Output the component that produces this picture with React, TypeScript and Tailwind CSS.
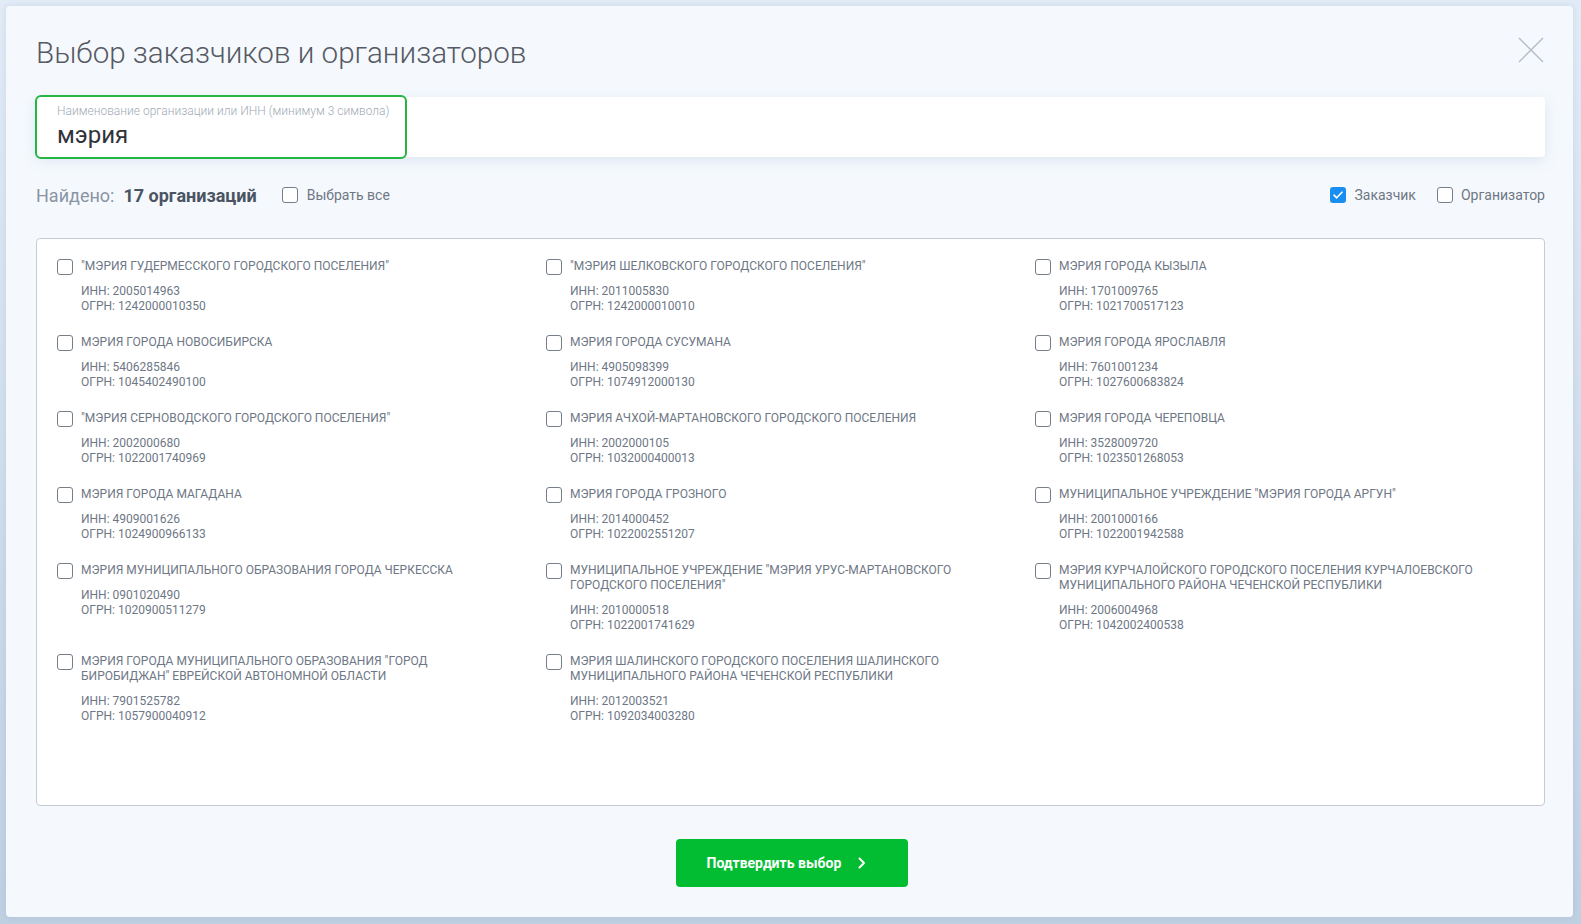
import React from 'react';

interface Org {
  name: string;
  inn: string;
  ogrn: string;
}

const orgs: Org[] = [
  { name: '"МЭРИЯ ГУДЕРМЕССКОГО ГОРОДСКОГО ПОСЕЛЕНИЯ"', inn: '2005014963', ogrn: '1242000010350' },
  { name: '"МЭРИЯ ШЕЛКОВСКОГО ГОРОДСКОГО ПОСЕЛЕНИЯ"', inn: '2011005830', ogrn: '1242000010010' },
  { name: 'МЭРИЯ ГОРОДА КЫЗЫЛА', inn: '1701009765', ogrn: '1021700517123' },
  { name: 'МЭРИЯ ГОРОДА НОВОСИБИРСКА', inn: '5406285846', ogrn: '1045402490100' },
  { name: 'МЭРИЯ ГОРОДА СУСУМАНА', inn: '4905098399', ogrn: '1074912000130' },
  { name: 'МЭРИЯ ГОРОДА ЯРОСЛАВЛЯ', inn: '7601001234', ogrn: '1027600683824' },
  { name: '"МЭРИЯ СЕРНОВОДСКОГО ГОРОДСКОГО ПОСЕЛЕНИЯ"', inn: '2002000680', ogrn: '1022001740969' },
  { name: 'МЭРИЯ АЧХОЙ-МАРТАНОВСКОГО ГОРОДСКОГО ПОСЕЛЕНИЯ', inn: '2002000105', ogrn: '1032000400013' },
  { name: 'МЭРИЯ ГОРОДА ЧЕРЕПОВЦА', inn: '3528009720', ogrn: '1023501268053' },
  { name: 'МЭРИЯ ГОРОДА МАГАДАНА', inn: '4909001626', ogrn: '1024900966133' },
  { name: 'МЭРИЯ ГОРОДА ГРОЗНОГО', inn: '2014000452', ogrn: '1022002551207' },
  { name: 'МУНИЦИПАЛЬНОЕ УЧРЕЖДЕНИЕ "МЭРИЯ ГОРОДА АРГУН"', inn: '2001000166', ogrn: '1022001942588' },
  { name: 'МЭРИЯ МУНИЦИПАЛЬНОГО ОБРАЗОВАНИЯ ГОРОДА ЧЕРКЕССКА', inn: '0901020490', ogrn: '1020900511279' },
  { name: 'МУНИЦИПАЛЬНОЕ УЧРЕЖДЕНИЕ "МЭРИЯ УРУС-МАРТАНОВСКОГО ГОРОДСКОГО ПОСЕЛЕНИЯ"', inn: '2010000518', ogrn: '1022001741629' },
  { name: 'МЭРИЯ КУРЧАЛОЙСКОГО ГОРОДСКОГО ПОСЕЛЕНИЯ КУРЧАЛОЕВСКОГО МУНИЦИПАЛЬНОГО РАЙОНА ЧЕЧЕНСКОЙ РЕСПУБЛИКИ', inn: '2006004968', ogrn: '1042002400538' },
  { name: 'МЭРИЯ ГОРОДА МУНИЦИПАЛЬНОГО ОБРАЗОВАНИЯ "ГОРОД БИРОБИДЖАН" ЕВРЕЙСКОЙ АВТОНОМНОЙ ОБЛАСТИ', inn: '7901525782', ogrn: '1057900040912' },
  { name: 'МЭРИЯ ШАЛИНСКОГО ГОРОДСКОГО ПОСЕЛЕНИЯ ШАЛИНСКОГО МУНИЦИПАЛЬНОГО РАЙОНА ЧЕЧЕНСКОЙ РЕСПУБЛИКИ', inn: '2012003521', ogrn: '1092034003280' },
];

const Box: React.FC<{ checked?: boolean }> = ({ checked }) =>
  checked ? (
    <span className="flex h-4 w-4 shrink-0 items-center justify-center rounded-[3px] bg-[#1a8df0]">
      <svg width="10" height="8" viewBox="0 0 10 8" fill="none">
        <path d="M1 4.2L3.7 6.8L9 1.2" stroke="white" strokeWidth="1.6" strokeLinecap="round" strokeLinejoin="round" />
      </svg>
    </span>
  ) : (
    <span className="block h-4 w-4 shrink-0 rounded-[3px] border-[1.5px] border-[#767e8a] bg-white" />
  );

const light = { fontFamily: '"Roboto Light", Roboto, "Noto Sans", sans-serif' };

export default function App() {
  return (
    <div
      className="h-[924px] w-full overflow-hidden bg-gradient-to-b from-[#e2ecf7] to-[#c0d0e3] pl-[6px] pt-[6px]"
      style={{ fontFamily: 'Roboto, "Noto Sans", sans-serif' }}
    >
      <div className="relative flex h-[911px] w-[1567px] flex-col rounded-[4px] bg-[#f5f9fd] pl-[30px] pr-[28px] pt-[29px] shadow-[0_0_6px_rgba(80,110,150,0.15)]">
        {/* Close */}
        <button className="absolute right-[29px] top-[31px] h-[26px] w-[26px]">
          <svg width="26" height="26" viewBox="0 0 26 26" fill="none">
            <path d="M1 1L25 25M25 1L1 25" stroke="#b4bcc7" strokeWidth="1.4" />
          </svg>
        </button>

        <h1 className="text-[29.6px] font-light leading-[36px] text-[#555a64]" style={light}>
          Выбор заказчиков и организаторов
        </h1>

        {/* Search */}
        <div className="mt-[26px] flex h-[60px] rounded-[4px] bg-white shadow-[0_4px_14px_rgba(120,150,190,0.18)]">
          <div className="-my-[2px] -ml-px h-[64px] w-[372px] rounded-[6px] border-2 border-[#25b543] bg-white px-[20px] pt-[7px]">
            <div className="whitespace-nowrap text-[12px] font-light leading-[14px] text-[#a3abb5]" style={light}>
              Наименование организации или ИНН (минимум 3 символа)
            </div>
            <div className="mt-[2px] text-[24px] leading-[30px] text-[#303339]">мэрия</div>
          </div>
        </div>

        {/* Found row */}
        <div className="mt-[26px] flex h-[24px] items-center">
          <span className="text-[18px] text-[#8995a4]">Найдено:</span>
          <span className="ml-[9px] text-[18px] font-bold text-[#4b5462]">17 организаций</span>
          <label className="ml-[25px] flex items-center gap-[9px]">
            <Box />
            <span className="text-[14px] text-[#6f7784]">Выбрать все</span>
          </label>
          <div className="ml-auto flex items-center">
            <label className="flex items-center gap-[8px]">
              <Box checked />
              <span className="text-[14px] text-[#6f7784]">Заказчик</span>
            </label>
            <label className="ml-[21px] flex items-center gap-[8px]">
              <Box />
              <span className="text-[14px] text-[#6f7784]">Организатор</span>
            </label>
          </div>
        </div>

        {/* List */}
        <div className="mt-[31px] h-[568px] rounded-[4px] border border-[#c7ccd4] bg-white px-5 pt-[20px]">
          <div className="grid grid-cols-3 gap-y-[21.1px]">
            {orgs.map((o, i) => (
              <div key={i} className="flex items-start gap-[8px]">
                <Box />
                <div className="max-w-[430px] text-[12px] leading-[15px] text-[#6e7785]">
                  <div>{o.name}</div>
                  <div className="mt-[10px]">ИНН: {o.inn}</div>
                  <div>ОГРН: {o.ogrn}</div>
                </div>
              </div>
            ))}
          </div>
        </div>

        {/* Confirm */}
        <div className="mt-[33px] flex justify-center">
          <button className="ml-[2px] flex h-[48px] w-[232px] items-center gap-[17px] rounded-[4px] bg-[#02bd31] pl-[31px] text-[14px] font-bold text-white">
            <span>Подтвердить выбор</span>
            <svg width="8" height="12" viewBox="0 0 8 12" fill="none">
              <path d="M1.5 1.5L6 6L1.5 10.5" stroke="white" strokeWidth="2" strokeLinecap="round" strokeLinejoin="round" />
            </svg>
          </button>
        </div>
      </div>
    </div>
  );
}
